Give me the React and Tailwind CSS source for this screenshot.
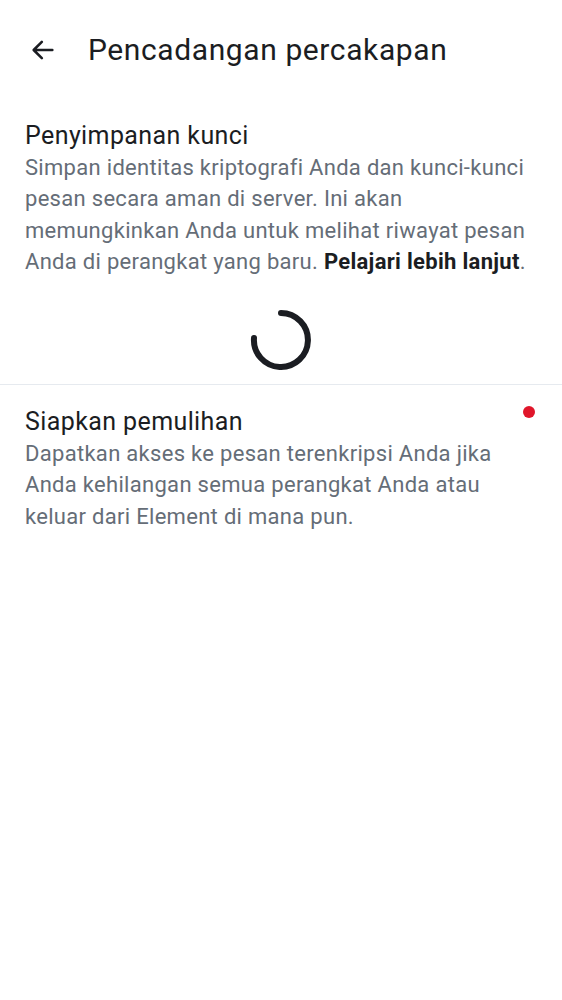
import React from "react";

export default function App() {
  return (
    <div className="w-[562px] h-[1000px] bg-white" style={{ fontFamily: "Roboto, 'Noto Sans', sans-serif" }}>
      <div className="h-[100px] flex items-center">
        <div className="w-[88px] flex justify-center">
          <svg width="28" height="28" viewBox="0 0 24 24" className="ml-[-2px]">
            <path d="M20 12H4.5M11 5l-7 7 7 7" fill="none" stroke="#1b1d22" strokeWidth="2.2" strokeLinecap="round" strokeLinejoin="round" />
          </svg>
        </div>
        <div className="text-[30px] text-[#1b1d22] leading-none tracking-[0.6px]">Pencadangan percakapan</div>
      </div>
      <div className="px-[25px] pt-[20px]">
        <div className="text-[25px] leading-[32px] text-[#1b1d22] tracking-[0.4px]">Penyimpanan kunci</div>
        <div className="text-[22px] leading-[31.3px] text-[#656d77] tracking-[0.3px]">
          Simpan identitas kriptografi Anda dan kunci-kunci pesan secara aman di server. Ini akan memungkinkan Anda untuk melihat riwayat pesan Anda di perangkat yang baru.{" "}
          <span className="font-bold text-[#1b1d22]">Pelajari lebih lanjut</span>.
        </div>
      </div>
      <div className="flex justify-center pt-[30px] pb-[11px]">
        <svg width="66" height="66" viewBox="0 0 66 66">
          <path d="M33 6 A27 27 0 1 1 6 31" fill="none" stroke="#1b1d22" strokeWidth="6" strokeLinecap="round" />
        </svg>
      </div>
      <div className="h-px bg-[#e6eaef]" />
      <div className="px-[25px] pt-[21px] flex">
        <div className="flex-1">
          <div className="text-[25px] leading-[32px] text-[#1b1d22] tracking-[0.4px]">Siapkan pemulihan</div>
          <div className="text-[22px] leading-[31.3px] text-[#656d77] tracking-[0.3px]">
            Dapatkan akses ke pesan terenkripsi Anda jika Anda kehilangan semua perangkat Anda atau keluar dari Element di mana pun.
          </div>
        </div>
        <div className="w-[12px] h-[12px] rounded-full bg-[#e0162a] mt-[0px] ml-[10px] mr-[2px] shrink-0" />
      </div>
    </div>
  );
}
